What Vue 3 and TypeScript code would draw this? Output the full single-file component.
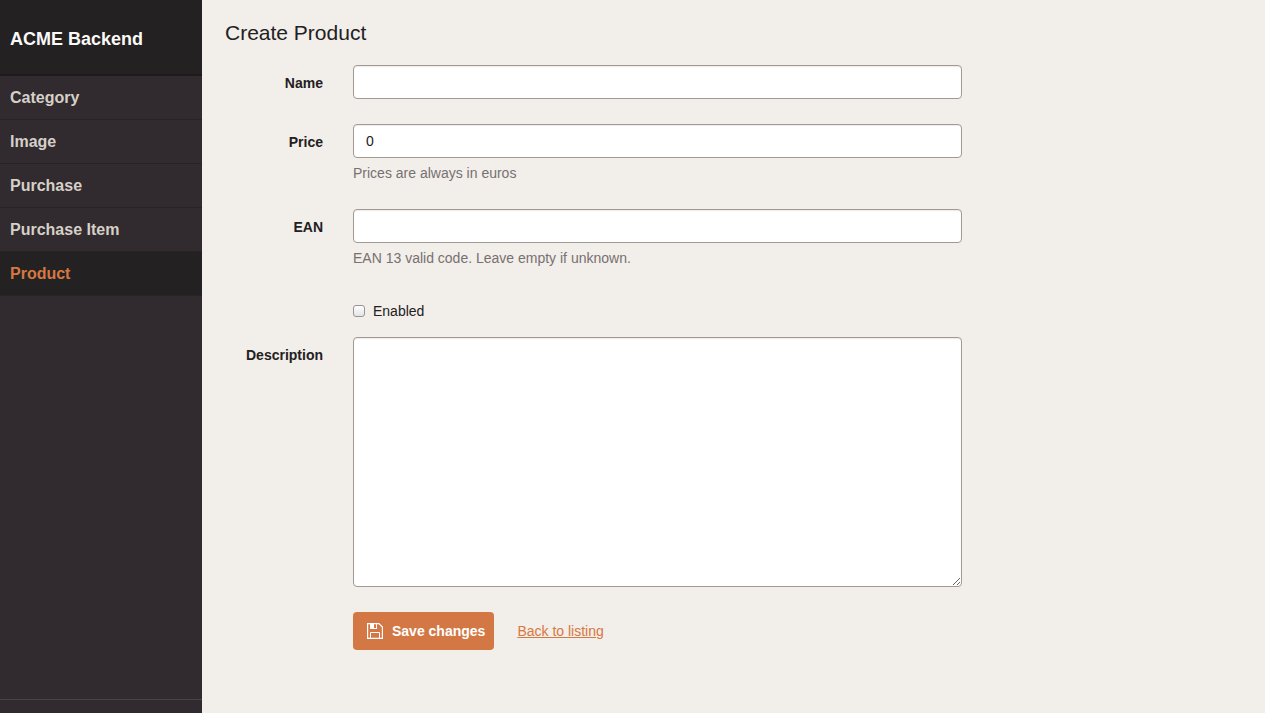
<script setup lang="ts">
import { ref } from 'vue'

interface MenuItem {
  label: string
  active?: boolean
}

const menu: MenuItem[] = [
  { label: 'Category' },
  { label: 'Image' },
  { label: 'Purchase' },
  { label: 'Purchase Item' },
  { label: 'Product', active: true },
]

const name = ref('')
const price = ref('0')
const ean = ref('')
const enabled = ref(false)
const description = ref('')
</script>

<template>
  <div class="layout">
    <aside class="sidebar">
      <header class="brand"><a href="#">ACME Backend</a></header>
      <nav>
        <ul class="menu">
          <li v-for="item in menu" :key="item.label" :class="{ active: item.active }">
            <a href="#" :aria-current="item.active ? 'page' : undefined">{{ item.label }}</a>
          </li>
        </ul>
      </nav>
      <footer class="sidebar-footer"></footer>
    </aside>

    <main class="content">
      <h1>Create Product</h1>
      <form @submit.prevent>
        <div class="row">
          <label class="caption" for="name">Name</label>
          <div class="field"><input id="name" v-model="name" class="control" type="text" /></div>
        </div>
        <div class="row">
          <label class="caption" for="price">Price</label>
          <div class="field">
            <input id="price" v-model="price" class="control" type="text" aria-describedby="price-help" />
            <p id="price-help" class="help">Prices are always in euros</p>
          </div>
        </div>
        <div class="row">
          <label class="caption" for="ean">EAN</label>
          <div class="field">
            <input id="ean" v-model="ean" class="control" type="text" aria-describedby="ean-help" />
            <p id="ean-help" class="help">EAN 13 valid code. Leave empty if unknown.</p>
          </div>
        </div>
        <div class="row check-row">
          <label class="field check">
            <input v-model="enabled" type="checkbox" />
            <span>Enabled</span>
          </label>
        </div>
        <div class="row">
          <label class="caption" for="description">Description</label>
          <div class="field">
            <textarea id="description" v-model="description" class="control"></textarea>
          </div>
        </div>
        <div class="row">
          <div class="field actions">
            <button type="submit" class="save">
              <svg width="16" height="16" viewBox="0 0 16 16" aria-hidden="true">
                <path d="M.6 .6H12L15.4 4V15.4H.6Z" fill="none" stroke="currentColor" stroke-width="1.2" />
                <path fill-rule="evenodd" d="M3 0H10V6H3ZM7 1H9V5H7Z" fill="currentColor" />
                <path d="M3.5 15V9.5H12.5V15" fill="none" stroke="currentColor" />
              </svg>
              <span>Save changes</span>
            </button>
            <a href="#" class="back">Back to listing</a>
          </div>
        </div>
      </form>
    </main>
  </div>
</template>

<style>
body {
  background: #f2eeea;
}
</style>

<style scoped>
.layout,
.layout * {
  box-sizing: border-box;
}

.layout {
  display: flex;
  min-height: 100vh;
  background: #f2eeea;
  color: #222021;
  font: 14px/20px "Helvetica Neue", Helvetica, "Liberation Sans", Arial, sans-serif;
}

.sidebar {
  display: flex;
  flex-direction: column;
  flex: 0 0 202px;
  background: #312a2e;
  font-weight: 700;
}

.brand {
  padding: 27px 10px 23px;
  border-bottom: 2px solid #1e1a1c;
  background: #242122;
  font-size: 18px;
  line-height: 24px;
}

.brand a {
  color: #faf9f7;
  text-decoration: none;
}

.menu {
  margin: 0;
  padding: 0;
  list-style: none;
}

.menu a {
  display: block;
  padding: 12px 10px 11px;
  border-bottom: 1px solid #292326;
  color: #d5d0c8;
  font-size: 16px;
  text-decoration: none;
}

.menu .active a {
  background: #242122;
  color: #d67842;
}

.sidebar-footer {
  height: 14px;
  margin-top: auto;
  border-top: 1px solid #4a4347;
}

.content {
  flex: 1;
  min-width: 0;
  padding: 21px 25px 20px 23px;
}

h1 {
  margin: 0 0 20px;
  font-size: 21px;
  font-weight: 400;
  line-height: 24px;
}

.row {
  display: grid;
  grid-template-columns: 98px 60%;
  column-gap: 30px;
  align-items: start;
  margin-bottom: 25px;
}

.caption {
  padding-top: 8px;
  font-weight: 700;
  text-align: right;
}

.field {
  grid-column: 2;
}

.control {
  display: block;
  width: 100%;
  height: 34px;
  margin: 0;
  padding: 6px 12px;
  border: 1px solid #a39a93;
  border-radius: 4px;
  background: #fff;
  box-shadow: inset 0 1px 1px rgba(0, 0, 0, 0.08);
  color: #222021;
  font: inherit;
}

textarea.control {
  height: 250px;
  resize: both;
}

.help {
  margin: 5px 0 0;
  padding-bottom: 1px;
  color: #777170;
}

.check-row {
  margin: 32px 0 16px;
}

.check {
  display: flex;
  align-items: center;
  gap: 8px;
  justify-self: start;
}

.check input {
  appearance: none;
  width: 12px;
  height: 12px;
  margin: 0;
  border: 1px solid #989493;
  border-radius: 3px;
  background: linear-gradient(#fff, #e4e4e4);
}

.check input:checked {
  background: #d67842;
}

.actions {
  display: flex;
  align-items: center;
  gap: 23px;
}

.save {
  display: flex;
  align-items: center;
  gap: 9px;
  height: 38px;
  padding: 0 9px 0 14px;
  border: 0;
  border-radius: 4px;
  background: #d37844;
  color: #fff;
  font: inherit;
  font-weight: 700;
  white-space: nowrap;
  cursor: pointer;
}

.back {
  color: #d67842;
  text-decoration: underline;
}
</style>
